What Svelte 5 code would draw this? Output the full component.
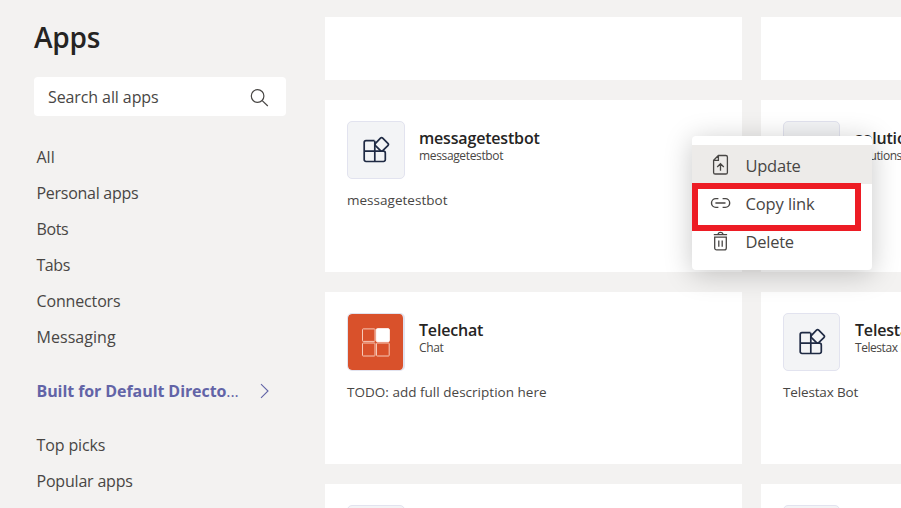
<script>
  const primary = [
    { label: 'All', ls: 0 },
    { label: 'Personal apps', ls: -0.27 },
    { label: 'Bots', ls: -0.4 },
    { label: 'Tabs', ls: -0.45 },
    { label: 'Connectors', ls: -0.15 },
    { label: 'Messaging', ls: 0.05 }
  ];
  const secondary = [
    { label: 'Top picks', ls: -0.12 },
    { label: 'Popular apps', ls: -0.2 }
  ];
  const cards = [
    { blank: true },
    { blank: true },
    { title: 'messagetestbot', by: 'messagetestbot', text: 'messagetestbot' },
    { title: 'solutions', by: 'solutions', text: '' },
    { title: 'Telechat', by: 'Chat', text: 'TODO: add full description here', tile: 'orange' },
    { title: 'Telestax Bot', by: 'Telestax Bot', text: 'Telestax Bot' },
    { title: '', by: '', text: '' },
    { title: '', by: '', text: '' }
  ];
</script>

<div class="page">
  <aside>
    <h1>Apps</h1>
    <div class="search">
      <span>Search all apps</span>
      <svg width="20" height="20" viewBox="0 0 20 20" fill="none" stroke="#484644" stroke-width="1.2">
        <circle cx="7.6" cy="8" r="6.3" /><path d="M12.2 12.6 17.8 18" />
      </svg>
    </div>
    <nav>
      {#each primary as item}
        <div class="link" style:letter-spacing="{item.ls}px">{item.label}</div>
      {/each}
      <div class="link active">
        <span class="name">Built for Default Directo<i>...</i></span>
        <svg width="10" height="16" viewBox="0 0 10 16" fill="none" stroke="#6264a7" stroke-width="1.1">
          <path d="M1 1.2 8 8 1 14.8" />
        </svg>
      </div>
      {#each secondary as item}
        <div class="link" style:letter-spacing="{item.ls}px">{item.label}</div>
      {/each}
    </nav>
  </aside>

  <main>
    {#each cards as card}
      <article class:blank={card.blank}>
        {#if !card.blank}
          <header>
            <div class="tile" class:orange={card.tile}>
              {#if card.tile}
                <svg width="28" height="29" viewBox="0 0 28 29" fill="none" stroke="#f7c9b8" stroke-width="1">
                  <rect x=".5" y=".9" width="12.5" height="12.5" rx=".7" />
                  <rect x="14.3" y=".7" width="13" height="13" rx="1" fill="#fff" stroke="#fff" />
                  <rect x=".5" y="15" width="12.5" height="13" rx=".7" />
                  <rect x="14.5" y="15" width="12.7" height="13" rx=".7" />
                </svg>
              {:else}
                <svg width="28" height="28" viewBox="0 0 28 28" fill="none" stroke="#1f2a44" stroke-width="1.7" stroke-linejoin="round">
                  <path d="M12.5 4.7H4A1.8 1.8 0 0 0 2.2 6.5V23.7A1.8 1.8 0 0 0 4 25.5H21.5A1.8 1.8 0 0 0 23.3 23.7V17A1.8 1.8 0 0 0 21.5 15.2H2.2M12.8 4.7V25.5" />
                  <path d="M18.5 2.2Q19.6 1.1 20.7 2.2L25.9 7.4Q27 8.5 25.9 9.6L20.7 14.6Q19.6 15.6 18.5 14.6L13.5 9.6Q12.5 8.5 13.5 7.4Z" />
                </svg>
              {/if}
            </div>
            <div class="names">
              <h2>{card.title}</h2>
              <p>{card.by}</p>
            </div>
          </header>
          <p class="desc">{card.text}</p>
        {/if}
      </article>
    {/each}
  </main>

  <div class="menu">
    <div class="row hover">
      <svg width="22" height="22" viewBox="0 0 22 22" fill="none" stroke="#484644" stroke-width="1.3">
        <path d="M8.4 1.5H15.8A1.6 1.6 0 0 1 17.4 3.1V18.4A1.6 1.6 0 0 1 15.8 20H5.2A1.6 1.6 0 0 1 3.6 18.4V6.3ZM8.4 1.5V6.3H3.6M10.5 16.8V9.8M7.2 13 10.5 9.7 13.8 13" />
      </svg>
      <span>Update</span>
    </div>
    <div class="row">
      <svg width="22" height="22" viewBox="0 0 22 22" fill="none" stroke="#484644" stroke-width="1.4">
        <path d="M8.4 6.6H5.9A4.4 4.4 0 0 0 5.9 15.4H8.4M12.6 6.6H15.3A4.4 4.4 0 0 1 15.3 15.4H12.6M5.4 11H15.5" />
      </svg>
      <span class="copy">Copy link</span>
    </div>
    <div class="row">
      <svg width="22" height="22" viewBox="0 0 22 22" fill="none" stroke="#484644" stroke-width="1.3">
        <path d="M3.8 4.6H17.1M8.1 4.5Q8.2 2.4 10.5 2.4T12.9 4.5M4.7 7.1H16.3V18A1.9 1.9 0 0 1 14.4 19.9H6.6A1.9 1.9 0 0 1 4.7 18ZM8.8 10.5V16.8M12.2 10.5V16.8" />
      </svg>
      <span>Delete</span>
    </div>
  </div>
  <div class="highlight"></div>
</div>

<style>
  :global(body) { margin: 0; overflow: hidden; }
  * { box-sizing: border-box; }
  svg { display: block; flex: none; }
  .page {
    position: relative;
    display: flex;
    width: 901px;
    height: 508px;
    overflow: hidden;
    background: #f3f2f1;
    color: #484644;
    font-family: "Open Sans", "Noto Sans", sans-serif;
    white-space: nowrap;
  }
  aside { flex: none; width: 325px; padding: 17px 39px 0 34px; }
  h1 { margin: 0; font-size: 28px; line-height: 40px; font-weight: 600; color: #252423; letter-spacing: -0.2px; }
  .search {
    display: flex;
    align-items: center;
    justify-content: space-between;
    height: 39px;
    margin-top: 20px;
    padding: 1px 16px 0 14px;
    border-radius: 4px;
    background: #fff;
    font-size: 16px;
    letter-spacing: -0.1px;
  }
  .search svg { margin-top: 1px; }
  nav { padding: 23px 0 0 2.5px; font-size: 16px; }
  .link { height: 36px; line-height: 36px; }
  .active {
    display: flex;
    align-items: center;
    justify-content: space-between;
    margin: 18px 16px 18px 0;
    color: #6264a7;
    font-weight: 700;
    letter-spacing: -0.08px;
  }
  .active i { font-style: normal; font-weight: 400; }
  main {
    flex: none;
    display: grid;
    grid-template-columns: 417px 417px;
    grid-template-rows: 63px 172px 172px 172px;
    gap: 20px 19px;
    padding-top: 17px;
  }
  article { padding: 21px 22px; background: #fff; }
  header { display: flex; gap: 14px; }
  .tile {
    flex: none;
    display: grid;
    place-items: center;
    width: 58px;
    height: 58px;
    border: 1px solid #e2e3ef;
    border-radius: 5px;
    background: #f3f4f6;
  }
  article:nth-child(even) .tile { width: 57px; margin-right: 1px; }
  .tile.orange { background: #d9512b; background-clip: padding-box; border-right-width: 2px; }
  .names { padding-top: 6px; }
  h2 { margin: 0; height: 22px; font-size: 16px; line-height: 22px; font-weight: 600; color: #252423; letter-spacing: -0.18px; }
  .names p { margin: 0; height: 14px; font-size: 12px; line-height: 14px; letter-spacing: -0.35px; }
  article:nth-child(even) .names p { letter-spacing: -0.45px; }
  .desc { margin: 11px 0 0; font-size: 13.5px; line-height: 20px; letter-spacing: 0.02px; }
  article:nth-child(even) .desc { letter-spacing: -0.15px; }
  .menu {
    position: absolute;
    left: 692px;
    top: 136px;
    width: 180px;
    height: 134px;
    padding-top: 9px;
    border-radius: 4px;
    background: #fff;
    box-shadow: 0 4px 28px rgba(0, 0, 0, 0.22);
  }
  .row { display: flex; align-items: center; gap: 13.5px; height: 38px; padding-left: 18px; font-size: 16.5px; letter-spacing: -0.25px; }
  .row .copy { letter-spacing: -0.1px; }
  .row span { margin-top: 2px; line-height: 22px; }
  .hover { height: 39px; background: #edebe9; }
  .highlight {
    position: absolute;
    left: 692px;
    top: 183px;
    width: 169px;
    height: 48px;
    border: 6px solid #ed1c24;
  }
</style>
